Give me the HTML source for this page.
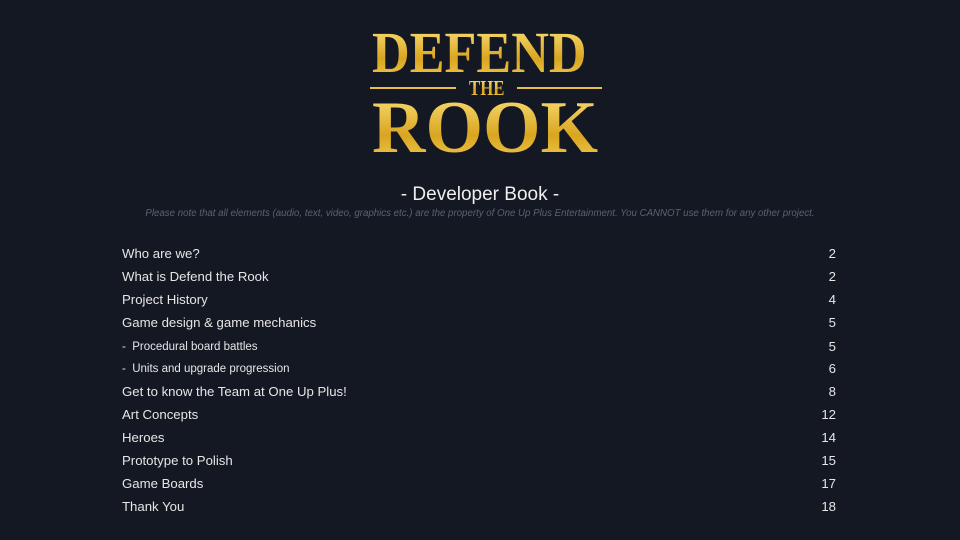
<!DOCTYPE html>
<html><head><style>
body{margin:0;width:960px;height:540px;background:#141823;font-family:"Liberation Sans",sans-serif;overflow:hidden;position:relative;color:#e6e6e6}
.g{position:absolute;font-family:"Liberation Serif",serif;font-weight:bold;background:linear-gradient(#fbe27a,#d9a520 60%,#f2cc52);-webkit-background-clip:text;background-clip:text;color:transparent;white-space:nowrap;line-height:1;transform-origin:left}
.line{position:absolute;height:2px;background:#e7bf46;top:87px}
.row{position:absolute;left:122px;width:714px;font-size:13.2px;display:flex;justify-content:space-between;line-height:16px}
.sub{font-size:11.5px}
</style></head><body>
<div class="g" style="left:372px;top:24px;font-size:58px;transform:scaleX(0.9)">DEFEND</div>
<div class="line" style="left:370px;width:86px"></div>
<div class="line" style="left:517px;width:85px"></div>
<div class="g" style="left:469px;top:78px;font-size:21px;transform:scaleX(0.8)">THE</div>
<div class="g" style="left:372px;top:91px;font-size:74px;transform:scaleX(1.0)">ROOK</div>
<div style="position:absolute;top:184px;width:960px;text-align:center;font-size:19px;color:#eee">- Developer Book -</div>
<div style="position:absolute;top:208px;width:960px;text-align:center;font-size:9.7px;font-style:italic;color:#5c6170">Please note that all elements (audio, text, video, graphics etc.) are the property of One Up Plus Entertainment. You CANNOT use them for any other project.</div>
<div class="row" style="top:246px"><span>Who are we?</span><span>2</span></div>
<div class="row" style="top:269px"><span>What is Defend the Rook</span><span>2</span></div>
<div class="row" style="top:292px"><span>Project History</span><span>4</span></div>
<div class="row" style="top:315px"><span>Game design &amp; game mechanics</span><span>5</span></div>
<div class="row" style="top:339px"><span class="sub">-&nbsp; Procedural board battles</span><span>5</span></div>
<div class="row" style="top:361px"><span class="sub">-&nbsp; Units and upgrade progression</span><span>6</span></div>
<div class="row" style="top:384px"><span>Get to know the Team at One Up Plus!</span><span>8</span></div>
<div class="row" style="top:407px"><span>Art Concepts</span><span>12</span></div>
<div class="row" style="top:430px"><span>Heroes</span><span>14</span></div>
<div class="row" style="top:453px"><span>Prototype to Polish</span><span>15</span></div>
<div class="row" style="top:476px"><span>Game Boards</span><span>17</span></div>
<div class="row" style="top:499px"><span>Thank You</span><span>18</span></div>
</body></html>
